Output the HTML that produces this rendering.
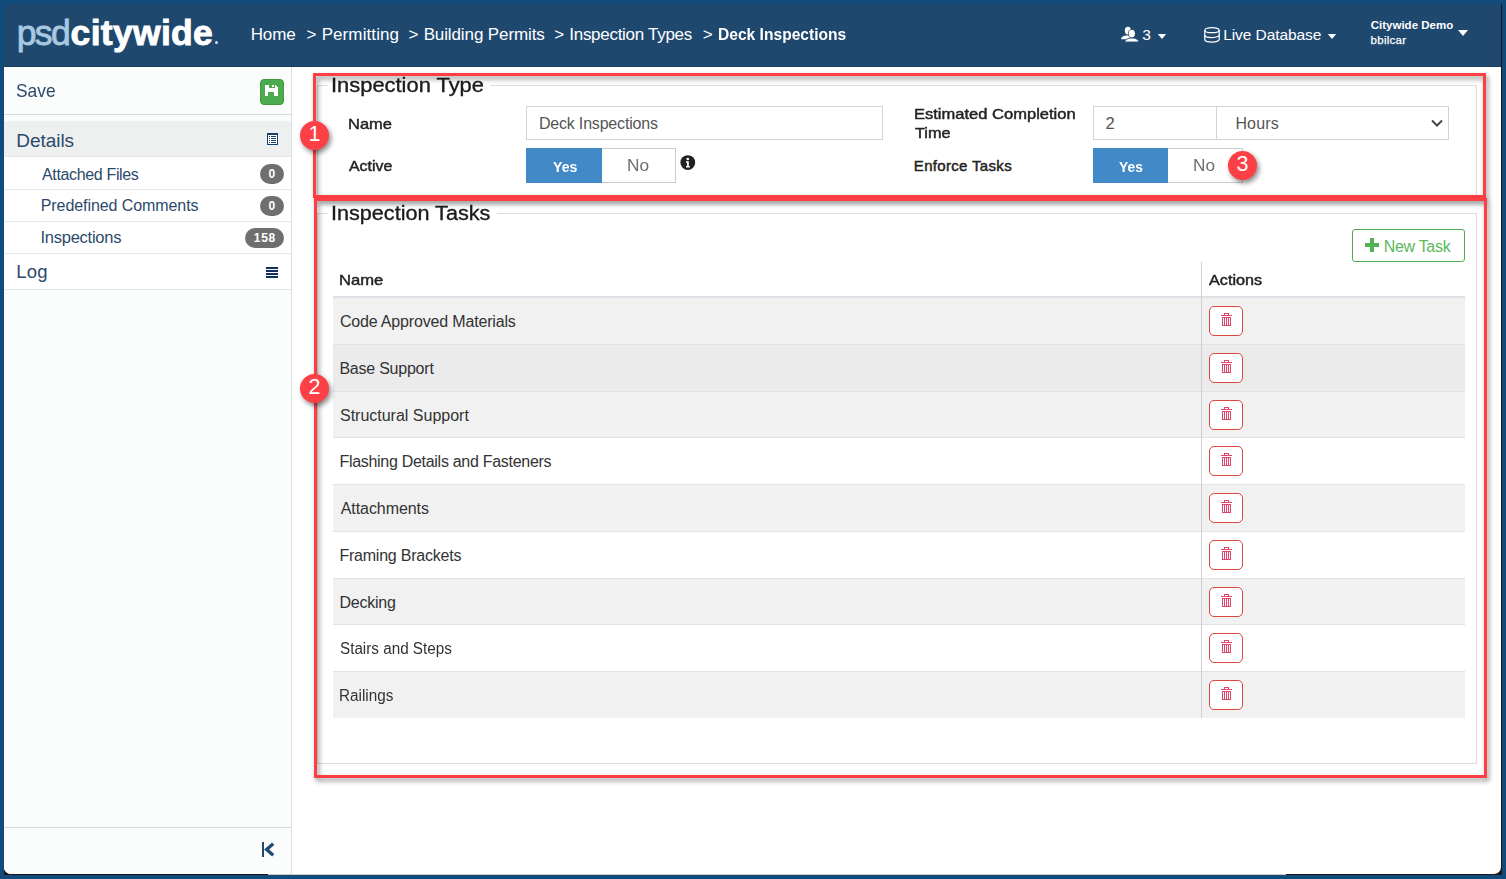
<!DOCTYPE html>
<html><head><meta charset="utf-8"><title>Deck Inspections</title>
<style>
html,body{margin:0;padding:0;}
body{width:1506px;height:879px;position:relative;overflow:hidden;background:#114b7b;font-family:"Liberation Sans",sans-serif;}
.a{position:absolute;box-sizing:border-box;}
.tx{position:absolute;white-space:nowrap;font-family:"Liberation Sans",sans-serif;}
#win{left:4px;top:4px;width:1498px;height:871px;background:#1d1519;}
#wini{left:4px;top:4px;width:1497px;height:870px;background:#ffffff;border-radius:0 0 7px 7px;overflow:hidden;}
#hdr{left:4px;top:4px;width:1497px;height:63px;background:#1f486f;border-bottom:1px solid #173d60;}
#side{left:4px;top:67px;width:288px;height:807px;background:#fbfcfc;border-right:1px solid #d9dfe5;border-radius:0 0 0 7px;}
.hl{height:1px;}
.redbox{border:3px solid #fd3e45;filter:drop-shadow(2px 3px 2.5px rgba(0,0,0,.45));}
.badge{width:29px;height:29px;border-radius:50%;background:#fd4046;filter:drop-shadow(2px 3px 2.5px rgba(0,0,0,.45));}
.pill{background:#6f6f6f;border-radius:10px;height:20px;}
.del{width:34px;height:30px;border:1.3px solid #d9473f;border-radius:5px;background:#fff;}
</style></head>
<body>
<div id="win" class="a"></div>
<div id="wini" class="a"></div>
<div id="hdr" class="a"></div>

<!-- logo -->
<div class="tx" style="left:16.7px;top:13.3px;font-size:35.5px;line-height:40px;letter-spacing:-1.6px;color:#a9c8e1;-webkit-text-stroke:0.8px #a9c8e1;">psd</div>
<div class="tx" style="left:70.6px;top:13.3px;font-size:35.5px;line-height:40px;font-weight:700;letter-spacing:0.3px;color:#ffffff;-webkit-text-stroke:0.9px #ffffff;">citywide</div>
<div class="a" style="left:215px;top:41px;width:3px;height:3px;border-radius:50%;background:#d6e2ec;"></div>

<!-- header icons -->
<svg class="a" style="left:1120px;top:26px" width="20" height="17" viewBox="0 0 20 17">
  <ellipse cx="7.9" cy="4.6" rx="3.1" ry="3.9" fill="#fff"/>
  <path d="M1 13.3C1.3 11.3 3 10.2 5.5 9.6H10.5V13.3Z" fill="#fff"/>
  <ellipse cx="11.8" cy="7.6" rx="3.3" ry="4.1" fill="#fff" stroke="#1f486f" stroke-width="0.9"/>
  <path d="M4.6 16C5.2 13.8 7.3 12.6 9.8 12.1H13.8C16.3 12.6 18.4 13.8 19 16Z" fill="#fff" stroke="#1f486f" stroke-width="0.9"/>
  <ellipse cx="11.8" cy="7.6" rx="2.9" ry="3.7" fill="#fff"/>
</svg>
<svg class="a" style="left:1157px;top:34px" width="10" height="5" viewBox="0 0 10 6"><path d="M0 0h10L5 6z" fill="#fff"/></svg>
<svg class="a" style="left:1204px;top:26.5px" width="16" height="16" viewBox="0 0 16 16">
  <g fill="none" stroke="#fff" stroke-width="1.25">
  <ellipse cx="8" cy="3.2" rx="7.2" ry="2.5"/>
  <path d="M0.8 3.2v9.4c0 1.4 3.2 2.6 7.2 2.6s7.2-1.2 7.2-2.6V3.2"/>
  <path d="M0.8 7.9c0 1.4 3.2 2.6 7.2 2.6s7.2-1.2 7.2-2.6"/>
  </g>
</svg>
<svg class="a" style="left:1327px;top:34px" width="10" height="5" viewBox="0 0 10 6"><path d="M0 0h10L5 6z" fill="#fff"/></svg>
<svg class="a" style="left:1458px;top:30px" width="10" height="6" viewBox="0 0 10 6"><path d="M0 0h10L5 6z" fill="#fff"/></svg>

<!-- sidebar -->
<div id="side" class="a"></div>
<div class="a hl" style="left:4px;top:114px;width:287px;background:#d3dae1;"></div>
<div class="a" style="left:4px;top:121px;width:287px;height:35px;background:#eef0f0;"></div>
<div class="a hl" style="left:4px;top:156px;width:287px;background:#e2e6ea;"></div>
<div class="a" style="left:4px;top:157px;width:287px;height:132px;background:#ffffff;"></div>
<div class="a hl" style="left:4px;top:189px;width:287px;background:#e6e9ec;"></div>
<div class="a hl" style="left:4px;top:221px;width:287px;background:#e6e9ec;"></div>
<div class="a hl" style="left:4px;top:253px;width:287px;background:#e6e9ec;"></div>
<div class="a hl" style="left:4px;top:289px;width:287px;background:#e3e7ea;"></div>
<div class="a hl" style="left:4px;top:827px;width:287px;background:#d3dae1;"></div>
<!-- save button -->
<div class="a" style="left:260px;top:79px;width:24px;height:26px;background:#4cab4e;border-radius:4px;border:1px solid #3f9d40;"></div>
<svg class="a" style="left:265px;top:85px" width="13" height="11" viewBox="0 0 13 11" shape-rendering="crispEdges">
  <path d="M0 0h10.5l2 2v9H0z" fill="#fff"/>
  <rect x="3.5" y="0" width="6" height="3" fill="#4cab4e"/>
  <rect x="7" y="0" width="1.5" height="2" fill="#fff"/>
  <rect x="3" y="7" width="6" height="4" fill="#4cab4e"/>
</svg>
<!-- details icon -->
<svg class="a" style="left:267px;top:133px" width="11" height="12" viewBox="0 0 11 12" shape-rendering="crispEdges">
  <rect x="0" y="0" width="11" height="12" fill="#173f6e"/>
  <rect x="1" y="2" width="9" height="9" fill="#fff"/>
  <g fill="#173f6e"><rect x="2" y="3" width="1" height="1"/><rect x="4" y="3" width="5" height="1"/>
  <rect x="2" y="5" width="1" height="1"/><rect x="4" y="5" width="5" height="1"/>
  <rect x="2" y="7" width="1" height="1"/><rect x="4" y="7" width="5" height="1"/>
  <rect x="2" y="9" width="1" height="1"/><rect x="4" y="9" width="5" height="1"/></g>
</svg>
<!-- badges -->
<div class="a pill" style="left:260px;top:164px;width:24px;"></div>
<div class="tx" style="left:268.5px;top:167px;font-size:12px;line-height:14px;font-weight:700;color:#fff;">0</div>
<div class="a pill" style="left:260px;top:196px;width:24px;"></div>
<div class="tx" style="left:268.5px;top:199px;font-size:12px;line-height:14px;font-weight:700;color:#fff;">0</div>
<div class="a pill" style="left:245px;top:228px;width:39px;"></div>
<div class="tx" style="left:253.8px;top:231px;font-size:12px;line-height:14px;font-weight:700;color:#fff;letter-spacing:0.7px;">158</div>
<!-- log icon -->
<svg class="a" style="left:266px;top:267px" width="12" height="11" viewBox="0 0 12 11">
  <g fill="#0f2f5c"><rect y="0" width="12" height="2"/><rect y="3" width="12" height="2"/><rect y="6" width="12" height="2"/><rect y="9" width="12" height="2"/></g>
</svg>
<!-- collapse icon -->
<svg class="a" style="left:261px;top:842px" width="14" height="15" viewBox="0 0 14 15">
  <rect x="1" y="0" width="2" height="15" fill="#1f4a73"/>
  <path d="M12.2 1.8L5.6 7.5l6.6 5.7" fill="none" stroke="#1f4a73" stroke-width="3.3"/>
</svg>
<div class="a" style="left:268px;top:874px;width:1018px;height:1px;background:#cfc9c6;"></div>

<!-- fieldset 1 -->
<div class="a" style="left:317px;top:85px;width:1160px;height:112px;border:1px solid #dcdcdc;"></div>
<div class="a" style="left:327px;top:80px;width:163px;height:10px;background:#fff;"></div>
<!-- name input -->
<div class="a" style="left:526px;top:106px;width:357px;height:34px;border:1px solid #cdd4db;background:#fff;"></div>
<!-- toggle active -->
<div class="a" style="left:526px;top:148px;width:150px;height:35px;border:1px solid #cccccc;background:#fff;"></div>
<div class="a" style="left:526px;top:148px;width:76px;height:35px;background:#4289c8;"></div>
<!-- info icon -->
<svg class="a" style="left:680px;top:155px" width="16" height="16" viewBox="0 0 16 16">
  <circle cx="7.8" cy="7.6" r="7.4" fill="#1f2123"/>
  <circle cx="7.8" cy="4" r="1.3" fill="#fff"/>
  <path d="M6 6.3h2.8v4.7h1v1.5H6V11h1V7.8H6z" fill="#fff"/>
</svg>
<!-- time input + select -->
<div class="a" style="left:1093px;top:106px;width:125px;height:34px;border:1px solid #cdd4db;background:#fff;"></div>
<div class="a" style="left:1216px;top:106px;width:233px;height:34px;border:1px solid #cdd4db;background:#fff;"></div>
<svg class="a" style="left:1431px;top:119px" width="12" height="9" viewBox="0 0 12 9">
  <path d="M1 1.5l5 5 5-5" fill="none" stroke="#444" stroke-width="2"/>
</svg>
<!-- toggle enforce -->
<div class="a" style="left:1093px;top:148px;width:150px;height:35px;border:1px solid #cccccc;background:#fff;"></div>
<div class="a" style="left:1093px;top:148px;width:75px;height:35px;background:#4289c8;"></div>

<!-- fieldset 2 -->
<div class="a" style="left:317px;top:213px;width:1160px;height:551px;border:1px solid #dcdcdc;"></div>
<div class="a" style="left:327px;top:205px;width:170px;height:12px;background:#fff;"></div>
<!-- new task btn -->
<div class="a" style="left:1352px;top:229px;width:113px;height:33px;border:1.3px solid #4cae4c;border-radius:3px;background:#fff;"></div>
<svg class="a" style="left:1365px;top:238px" width="15" height="14" viewBox="0 0 15 14">
  <path d="M5 0h4v5h5v4H9v5H5V9H0V5h5z" fill="#52b352"/>
</svg>
<!-- table -->
<div class="a" style="left:333px;top:296px;width:1132px;height:2px;background:#dde1e5;"></div>
<div class="a" style="left:333px;top:298px;width:1132px;height:46px;background:#f1f1f1;"></div>
<div class="a" style="left:333px;top:344px;width:1132px;height:47px;background:#ebebeb;"></div>
<div class="a" style="left:333px;top:391px;width:1132px;height:46px;background:#f1f1f1;"></div>
<div class="a" style="left:333px;top:437px;width:1132px;height:47px;background:#ffffff;"></div>
<div class="a" style="left:333px;top:484px;width:1132px;height:47px;background:#f1f1f1;"></div>
<div class="a" style="left:333px;top:531px;width:1132px;height:47px;background:#ffffff;"></div>
<div class="a" style="left:333px;top:578px;width:1132px;height:46px;background:#f1f1f1;"></div>
<div class="a" style="left:333px;top:624px;width:1132px;height:47px;background:#ffffff;"></div>
<div class="a" style="left:333px;top:671px;width:1132px;height:47px;background:#f1f1f1;"></div>
<div class="a hl" style="left:333px;top:344px;width:1132px;background:#dfe3e7;"></div>
<div class="a hl" style="left:333px;top:391px;width:1132px;background:#dfe3e7;"></div>
<div class="a hl" style="left:333px;top:437px;width:1132px;background:#dfe3e7;"></div>
<div class="a hl" style="left:333px;top:484px;width:1132px;background:#dfe3e7;"></div>
<div class="a hl" style="left:333px;top:531px;width:1132px;background:#dfe3e7;"></div>
<div class="a hl" style="left:333px;top:578px;width:1132px;background:#dfe3e7;"></div>
<div class="a hl" style="left:333px;top:624px;width:1132px;background:#dfe3e7;"></div>
<div class="a hl" style="left:333px;top:671px;width:1132px;background:#dfe3e7;"></div>
<div class="a del" style="left:1209px;top:306px;"></div>
<svg class="a" style="left:1220px;top:313px" width="12" height="13" viewBox="0 0 12 13" shape-rendering="crispEdges"><g fill="#df4469"><rect x="4" y="0" width="5" height="1"/><rect x="4" y="0" width="1" height="2"/><rect x="8" y="0" width="1" height="2"/><rect x="1" y="2" width="11" height="1"/><rect x="2" y="4" width="9" height="1"/><rect x="2" y="12" width="9" height="1"/><rect x="2" y="4" width="1" height="9"/><rect x="4" y="4" width="1" height="9"/><rect x="6" y="4" width="1" height="9"/><rect x="8" y="4" width="1" height="9"/><rect x="10" y="4" width="1" height="9"/></g></svg>
<div class="a del" style="left:1209px;top:353px;"></div>
<svg class="a" style="left:1220px;top:360px" width="12" height="13" viewBox="0 0 12 13" shape-rendering="crispEdges"><g fill="#df4469"><rect x="4" y="0" width="5" height="1"/><rect x="4" y="0" width="1" height="2"/><rect x="8" y="0" width="1" height="2"/><rect x="1" y="2" width="11" height="1"/><rect x="2" y="4" width="9" height="1"/><rect x="2" y="12" width="9" height="1"/><rect x="2" y="4" width="1" height="9"/><rect x="4" y="4" width="1" height="9"/><rect x="6" y="4" width="1" height="9"/><rect x="8" y="4" width="1" height="9"/><rect x="10" y="4" width="1" height="9"/></g></svg>
<div class="a del" style="left:1209px;top:400px;"></div>
<svg class="a" style="left:1220px;top:407px" width="12" height="13" viewBox="0 0 12 13" shape-rendering="crispEdges"><g fill="#df4469"><rect x="4" y="0" width="5" height="1"/><rect x="4" y="0" width="1" height="2"/><rect x="8" y="0" width="1" height="2"/><rect x="1" y="2" width="11" height="1"/><rect x="2" y="4" width="9" height="1"/><rect x="2" y="12" width="9" height="1"/><rect x="2" y="4" width="1" height="9"/><rect x="4" y="4" width="1" height="9"/><rect x="6" y="4" width="1" height="9"/><rect x="8" y="4" width="1" height="9"/><rect x="10" y="4" width="1" height="9"/></g></svg>
<div class="a del" style="left:1209px;top:446px;"></div>
<svg class="a" style="left:1220px;top:453px" width="12" height="13" viewBox="0 0 12 13" shape-rendering="crispEdges"><g fill="#df4469"><rect x="4" y="0" width="5" height="1"/><rect x="4" y="0" width="1" height="2"/><rect x="8" y="0" width="1" height="2"/><rect x="1" y="2" width="11" height="1"/><rect x="2" y="4" width="9" height="1"/><rect x="2" y="12" width="9" height="1"/><rect x="2" y="4" width="1" height="9"/><rect x="4" y="4" width="1" height="9"/><rect x="6" y="4" width="1" height="9"/><rect x="8" y="4" width="1" height="9"/><rect x="10" y="4" width="1" height="9"/></g></svg>
<div class="a del" style="left:1209px;top:493px;"></div>
<svg class="a" style="left:1220px;top:500px" width="12" height="13" viewBox="0 0 12 13" shape-rendering="crispEdges"><g fill="#df4469"><rect x="4" y="0" width="5" height="1"/><rect x="4" y="0" width="1" height="2"/><rect x="8" y="0" width="1" height="2"/><rect x="1" y="2" width="11" height="1"/><rect x="2" y="4" width="9" height="1"/><rect x="2" y="12" width="9" height="1"/><rect x="2" y="4" width="1" height="9"/><rect x="4" y="4" width="1" height="9"/><rect x="6" y="4" width="1" height="9"/><rect x="8" y="4" width="1" height="9"/><rect x="10" y="4" width="1" height="9"/></g></svg>
<div class="a del" style="left:1209px;top:540px;"></div>
<svg class="a" style="left:1220px;top:547px" width="12" height="13" viewBox="0 0 12 13" shape-rendering="crispEdges"><g fill="#df4469"><rect x="4" y="0" width="5" height="1"/><rect x="4" y="0" width="1" height="2"/><rect x="8" y="0" width="1" height="2"/><rect x="1" y="2" width="11" height="1"/><rect x="2" y="4" width="9" height="1"/><rect x="2" y="12" width="9" height="1"/><rect x="2" y="4" width="1" height="9"/><rect x="4" y="4" width="1" height="9"/><rect x="6" y="4" width="1" height="9"/><rect x="8" y="4" width="1" height="9"/><rect x="10" y="4" width="1" height="9"/></g></svg>
<div class="a del" style="left:1209px;top:587px;"></div>
<svg class="a" style="left:1220px;top:594px" width="12" height="13" viewBox="0 0 12 13" shape-rendering="crispEdges"><g fill="#df4469"><rect x="4" y="0" width="5" height="1"/><rect x="4" y="0" width="1" height="2"/><rect x="8" y="0" width="1" height="2"/><rect x="1" y="2" width="11" height="1"/><rect x="2" y="4" width="9" height="1"/><rect x="2" y="12" width="9" height="1"/><rect x="2" y="4" width="1" height="9"/><rect x="4" y="4" width="1" height="9"/><rect x="6" y="4" width="1" height="9"/><rect x="8" y="4" width="1" height="9"/><rect x="10" y="4" width="1" height="9"/></g></svg>
<div class="a del" style="left:1209px;top:633px;"></div>
<svg class="a" style="left:1220px;top:640px" width="12" height="13" viewBox="0 0 12 13" shape-rendering="crispEdges"><g fill="#df4469"><rect x="4" y="0" width="5" height="1"/><rect x="4" y="0" width="1" height="2"/><rect x="8" y="0" width="1" height="2"/><rect x="1" y="2" width="11" height="1"/><rect x="2" y="4" width="9" height="1"/><rect x="2" y="12" width="9" height="1"/><rect x="2" y="4" width="1" height="9"/><rect x="4" y="4" width="1" height="9"/><rect x="6" y="4" width="1" height="9"/><rect x="8" y="4" width="1" height="9"/><rect x="10" y="4" width="1" height="9"/></g></svg>
<div class="a del" style="left:1209px;top:680px;"></div>
<svg class="a" style="left:1220px;top:687px" width="12" height="13" viewBox="0 0 12 13" shape-rendering="crispEdges"><g fill="#df4469"><rect x="4" y="0" width="5" height="1"/><rect x="4" y="0" width="1" height="2"/><rect x="8" y="0" width="1" height="2"/><rect x="1" y="2" width="11" height="1"/><rect x="2" y="4" width="9" height="1"/><rect x="2" y="12" width="9" height="1"/><rect x="2" y="4" width="1" height="9"/><rect x="4" y="4" width="1" height="9"/><rect x="6" y="4" width="1" height="9"/><rect x="8" y="4" width="1" height="9"/><rect x="10" y="4" width="1" height="9"/></g></svg>
<div class="a" style="left:1201px;top:262px;width:1px;height:456px;background:#cfcfcf;"></div>

<span class="tx" style="left:250.64px;top:25.81px;font-size:17.0px;line-height:17.0px;font-weight:400;color:#ffffff;letter-spacing:-0.063px;">Home</span>
<span class="tx" style="left:306.44px;top:25.81px;font-size:17px;line-height:17px;font-weight:400;color:#ffffff;letter-spacing:0.000px;">&gt;</span>
<span class="tx" style="left:321.64px;top:25.81px;font-size:17.0px;line-height:17.0px;font-weight:400;color:#ffffff;letter-spacing:0.097px;">Permitting</span>
<span class="tx" style="left:408.54px;top:25.81px;font-size:17px;line-height:17px;font-weight:400;color:#ffffff;letter-spacing:0.000px;">&gt;</span>
<span class="tx" style="left:423.64px;top:25.81px;font-size:17.0px;line-height:17.0px;font-weight:400;color:#ffffff;letter-spacing:-0.111px;">Building Permits</span>
<span class="tx" style="left:554.24px;top:25.81px;font-size:17px;line-height:17px;font-weight:400;color:#ffffff;letter-spacing:0.000px;">&gt;</span>
<span class="tx" style="left:569.27px;top:25.81px;font-size:17.0px;line-height:17.0px;font-weight:400;color:#ffffff;letter-spacing:-0.283px;">Inspection Types</span>
<span class="tx" style="left:702.84px;top:25.81px;font-size:17px;line-height:17px;font-weight:400;color:#ffffff;letter-spacing:0.000px;">&gt;</span>
<span class="tx" style="left:718.29px;top:26.21px;font-size:17.0px;line-height:17.0px;font-weight:700;color:#ffffff;transform-origin:0 0;transform:scaleX(0.9174);">Deck Inspections</span>
<span class="tx" style="left:1142.16px;top:27.38px;font-size:15.5px;line-height:15.5px;font-weight:400;color:#ffffff;letter-spacing:0.000px;">3</span>
<span class="tx" style="left:1223.16px;top:27.38px;font-size:15.5px;line-height:15.5px;font-weight:400;color:#ffffff;letter-spacing:-0.076px;">Live Database</span>
<span class="tx" style="left:1370.74px;top:20.27px;font-size:11.5px;line-height:11.5px;font-weight:700;color:#ffffff;letter-spacing:0.003px;">Citywide Demo</span>
<span class="tx" style="left:1370.51px;top:35.07px;font-size:11.5px;line-height:11.5px;font-weight:400;color:#ffffff;letter-spacing:0.294px;-webkit-text-stroke:0.25px #fff;">bbilcar</span>
<span class="tx" style="left:16.32px;top:81.02px;font-size:19.0px;line-height:19.0px;font-weight:400;color:#2b4a6b;transform-origin:0 0;transform:scaleX(0.9143);">Save</span>
<span class="tx" style="left:16.28px;top:130.72px;font-size:19.0px;line-height:19.0px;font-weight:400;color:#2b4a6b;letter-spacing:-0.049px;">Details</span>
<span class="tx" style="left:42.00px;top:166.76px;font-size:16.0px;line-height:16.0px;font-weight:400;color:#2b4a6b;letter-spacing:-0.348px;">Attached Files</span>
<span class="tx" style="left:40.72px;top:198.26px;font-size:16.0px;line-height:16.0px;font-weight:400;color:#2b4a6b;letter-spacing:-0.075px;">Predefined Comments</span>
<span class="tx" style="left:40.52px;top:228.63px;font-size:16.5px;line-height:16.5px;font-weight:400;color:#2b4a6b;letter-spacing:-0.260px;">Inspections</span>
<span class="tx" style="left:16.32px;top:263.04px;font-size:18.5px;line-height:18.5px;font-weight:400;color:#2b4a6b;letter-spacing:0.222px;">Log</span>
<span class="tx" style="left:331.03px;top:74.87px;font-size:20.0px;line-height:20.0px;font-weight:400;color:#1b1b1b;transform-origin:0 0;transform:scaleX(1.0948);-webkit-text-stroke:0.35px #1b1b1b;">Inspection Type</span>
<span class="tx" style="left:347.68px;top:116.00px;font-size:15.0px;line-height:15.0px;font-weight:400;color:#222222;transform-origin:0 0;transform:scaleX(1.0996);-webkit-text-stroke:0.45px #222222;">Name</span>
<span class="tx" style="left:349.00px;top:158.00px;font-size:15.0px;line-height:15.0px;font-weight:400;color:#222222;transform-origin:0 0;transform:scaleX(1.0614);-webkit-text-stroke:0.45px #222222;">Active</span>
<span class="tx" style="left:913.68px;top:106.20px;font-size:15.0px;line-height:15.0px;font-weight:400;color:#222222;transform-origin:0 0;transform:scaleX(1.1015);-webkit-text-stroke:0.45px #222222;">Estimated Completion</span>
<span class="tx" style="left:914.67px;top:125.00px;font-size:15.0px;line-height:15.0px;font-weight:400;color:#222222;transform-origin:0 0;transform:scaleX(1.0860);-webkit-text-stroke:0.45px #222222;">Time</span>
<span class="tx" style="left:913.80px;top:157.50px;font-size:15.0px;line-height:15.0px;font-weight:400;color:#222222;letter-spacing:0.327px;-webkit-text-stroke:0.45px #222222;">Enforce Tasks</span>
<span class="tx" style="left:538.92px;top:116.06px;font-size:16.0px;line-height:16.0px;font-weight:400;color:#555555;letter-spacing:-0.186px;">Deck Inspections</span>
<span class="tx" style="left:1105.38px;top:115.43px;font-size:16.5px;line-height:16.5px;font-weight:400;color:#555555;letter-spacing:0.000px;">2</span>
<span class="tx" style="left:1235.42px;top:115.96px;font-size:16.0px;line-height:16.0px;font-weight:400;color:#555555;letter-spacing:0.140px;">Hours</span>
<span class="tx" style="left:552.59px;top:158.50px;font-size:15.0px;line-height:15.0px;font-weight:700;color:#ffffff;transform-origin:0 0;transform:scaleX(0.9404);">Yes</span>
<span class="tx" style="left:627.12px;top:157.66px;font-size:16.0px;line-height:16.0px;font-weight:400;color:#6e6e6e;transform-origin:0 0;transform:scaleX(1.0802);">No</span>
<span class="tx" style="left:1119.09px;top:158.50px;font-size:15.0px;line-height:15.0px;font-weight:700;color:#ffffff;transform-origin:0 0;transform:scaleX(0.9205);">Yes</span>
<span class="tx" style="left:1193.22px;top:157.66px;font-size:16.0px;line-height:16.0px;font-weight:400;color:#6e6e6e;transform-origin:0 0;transform:scaleX(1.0748);">No</span>
<span class="tx" style="left:331.26px;top:202.67px;font-size:20.0px;line-height:20.0px;font-weight:400;color:#1b1b1b;transform-origin:0 0;transform:scaleX(1.0801);-webkit-text-stroke:0.35px #1b1b1b;">Inspection Tasks</span>
<span class="tx" style="left:1383.72px;top:238.86px;font-size:16.0px;line-height:16.0px;font-weight:400;color:#5cb85c;letter-spacing:-0.307px;">New Task</span>
<span class="tx" style="left:339.37px;top:271.80px;font-size:15.0px;line-height:15.0px;font-weight:400;color:#222222;transform-origin:0 0;transform:scaleX(1.1075);-webkit-text-stroke:0.45px #222222;">Name</span>
<span class="tx" style="left:1209.30px;top:272.40px;font-size:15.0px;line-height:15.0px;font-weight:400;color:#222222;transform-origin:0 0;transform:scaleX(1.0788);-webkit-text-stroke:0.45px #222222;">Actions</span>
<span class="tx" style="left:339.90px;top:313.96px;font-size:16.0px;line-height:16.0px;font-weight:400;color:#333333;letter-spacing:-0.167px;">Code Approved Materials</span>
<span class="tx" style="left:339.42px;top:360.96px;font-size:16.0px;line-height:16.0px;font-weight:400;color:#333333;letter-spacing:-0.230px;">Base Support</span>
<span class="tx" style="left:339.98px;top:407.96px;font-size:16.0px;line-height:16.0px;font-weight:400;color:#333333;letter-spacing:-0.005px;">Structural Support</span>
<span class="tx" style="left:339.42px;top:453.96px;font-size:16.0px;line-height:16.0px;font-weight:400;color:#333333;letter-spacing:-0.290px;">Flashing Details and Fasteners</span>
<span class="tx" style="left:340.70px;top:500.96px;font-size:16.0px;line-height:16.0px;font-weight:400;color:#333333;letter-spacing:-0.067px;">Attachments</span>
<span class="tx" style="left:339.42px;top:547.96px;font-size:16.0px;line-height:16.0px;font-weight:400;color:#333333;letter-spacing:-0.222px;">Framing Brackets</span>
<span class="tx" style="left:339.42px;top:594.96px;font-size:16.0px;line-height:16.0px;font-weight:400;color:#333333;letter-spacing:-0.208px;">Decking</span>
<span class="tx" style="left:340.01px;top:640.96px;font-size:16.0px;line-height:16.0px;font-weight:400;color:#333333;transform-origin:0 0;transform:scaleX(0.9525);">Stairs and Steps</span>
<span class="tx" style="left:339.48px;top:687.96px;font-size:16.0px;line-height:16.0px;font-weight:400;color:#333333;transform-origin:0 0;transform:scaleX(0.9551);">Railings</span>

<!-- annotations -->
<div class="a redbox" style="left:313px;top:73px;width:1173px;height:125px;"></div>
<div class="a redbox" style="left:314px;top:198px;width:1173px;height:580px;"></div>
<div class="a badge" style="left:300px;top:121px;"></div>
<div class="a badge" style="left:300px;top:374px;"></div>
<div class="a badge" style="left:1228px;top:151px;"></div>
<div class="tx" style="left:294.5px;top:123.00000000000001px;width:40px;text-align:center;font-size:21.5px;line-height:23px;color:#fff;">1</div>
<div class="tx" style="left:294.5px;top:376.0px;width:40px;text-align:center;font-size:21.5px;line-height:23px;color:#fff;">2</div>
<div class="tx" style="left:1222.6px;top:153.1px;width:40px;text-align:center;font-size:21.5px;line-height:23px;color:#fff;">3</div>
</body></html>
